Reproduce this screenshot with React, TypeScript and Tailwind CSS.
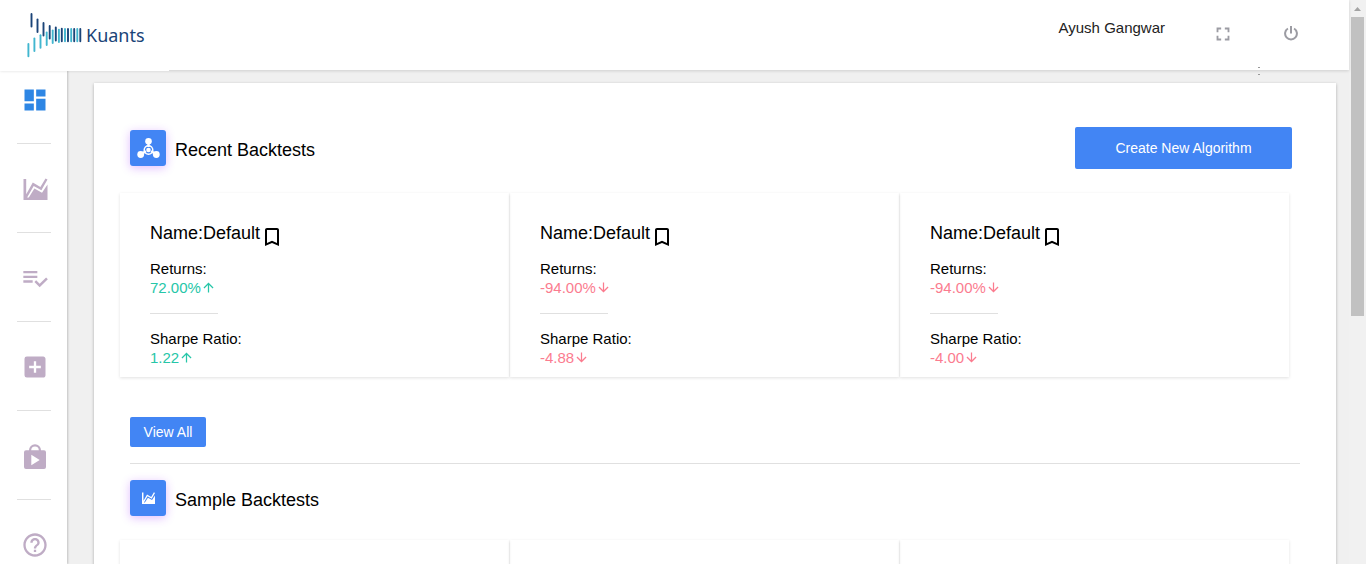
import type { ReactNode } from 'react';
import {
  MdAddBox,
  MdArrowDownward,
  MdArrowUpward,
  MdBookmarkBorder,
  MdDashboard,
  MdFullscreen,
  MdHelpOutline,
} from 'react-icons/md';

type Metric = { label: string; value: string; up: boolean };
type Backtest = { id: number; name: string; metrics: Metric[] };

const recent: Backtest[] = [
  {
    id: 1,
    name: 'Default',
    metrics: [
      { label: 'Returns:', value: '72.00%', up: true },
      { label: 'Sharpe Ratio:', value: '1.22', up: true },
    ],
  },
  {
    id: 2,
    name: 'Default',
    metrics: [
      { label: 'Returns:', value: '-94.00%', up: false },
      { label: 'Sharpe Ratio:', value: '-4.88', up: false },
    ],
  },
  {
    id: 3,
    name: 'Default',
    metrics: [
      { label: 'Returns:', value: '-94.00%', up: false },
      { label: 'Sharpe Ratio:', value: '-4.00', up: false },
    ],
  },
];

const sampleIds = [1, 2, 3];

const darkBars = [
  [31.5, 14, 26.5],
  [37.5, 19.5, 32],
  [43.5, 23, 35.5],
  [49.7, 26, 38.5],
  [55.8, 27.5, 40.5],
  [61.8, 28.7, 41.3],
  [68, 29, 41.3],
  [74.2, 29, 41.3],
  [80.3, 29, 41.3],
];

const tealBars = [
  [28.4, 44, 56.3],
  [34.4, 38.5, 51],
  [40.5, 35.3, 47.8],
  [46.7, 32.5, 45],
  [52.7, 30.5, 43],
  [58.9, 29.7, 42],
  [65, 29, 41.3],
  [71.2, 29, 41.3],
  [77.3, 29, 41.3],
];

function LogoMark() {
  return (
    <svg viewBox="26 12 57 46" className="h-[46px] w-[57px]" aria-hidden="true" strokeLinecap="round" strokeWidth="1.9">
      {tealBars.map(([x, y1, y2]) => (
        <line key={x} x1={x} x2={x} y1={y1} y2={y2} stroke="#41b6cf" />
      ))}
      {darkBars.map(([x, y1, y2]) => (
        <line key={x} x1={x} x2={x} y1={y1} y2={y2} stroke="#1b4478" />
      ))}
    </svg>
  );
}

function ChartIcon({ className }: { className: string }) {
  return (
    <svg viewBox="0 0 24 22" className={className} fill="currentColor" aria-hidden="true">
      <path d="M0 1h2.700v15.300L9.300 4.600l7.600 4.500L22 .4l2 1.200-6.100 10.700-7.700-4.400L3.600 19.500h1.700l5.600-9.100 7.600 4.300L24 6.600V22H0z" />
    </svg>
  );
}

function PlaylistCheckIcon() {
  return (
    <svg viewBox="0 0 24 24" className="size-7" fill="currentColor" aria-hidden="true">
      <path d="M14 10H2v2h12v-2zm0-4H2v2h12V6zM2 16h8v-2H2v2zm19.500-4.500L23 13l-6.990 7-4.510-4.500L13 14l3.010 3 5.490-5.500z" />
    </svg>
  );
}

function BagIcon() {
  return (
    <svg viewBox="0 0 22 25" className="h-[25px] w-[22px]" fill="currentColor" aria-hidden="true">
      <path
        fillRule="evenodd"
        d="M5 6.200a6 6 0 0 1 12 0h3a2 2 0 0 1 2 2V23a2 2 0 0 1-2 2H2a2 2 0 0 1-2-2V8.200a2 2 0 0 1 2-2zM7.200 6.200h7.600a3.800 3.800 0 0 0-7.600 0zM7.300 10.800v10.400l8.400-5.200z"
      />
    </svg>
  );
}

function PowerIcon() {
  return (
    <svg viewBox="0 0 14 16" className="h-4 w-[14px]" fill="none" stroke="currentColor" strokeWidth="2" aria-hidden="true">
      <path d="M7 0v7.500M3.900 2.500a5.900 5.900 0 1 0 6.200 0" />
    </svg>
  );
}

function MoleculeIcon() {
  return (
    <svg viewBox="0 0 24 22" className="h-[22px] w-6" aria-hidden="true">
      <g stroke="#fff" fill="none">
        <path d="M12.500 4v6M4.500 17.300l5.500-3M20.500 17.300l-5.500-3" strokeWidth="2.400" />
        <circle cx="12.500" cy="13" r="4.300" strokeWidth="1.500" />
      </g>
      <g fill="#fff">
        <circle cx="12.500" cy="4.300" r="3.300" />
        <circle cx="4.700" cy="17.500" r="3.400" />
        <circle cx="20.300" cy="17.500" r="3.400" />
        <circle cx="12.500" cy="13" r="2.300" />
      </g>
    </svg>
  );
}

const navItems: { label: string; icon: ReactNode; active?: boolean }[] = [
  { label: 'Dashboard', icon: <MdDashboard className="size-7" />, active: true },
  { label: 'Backtests', icon: <ChartIcon className="h-[22px] w-[25px]" /> },
  { label: 'Orders', icon: <PlaylistCheckIcon /> },
  { label: 'Create', icon: <MdAddBox className="size-7" /> },
  { label: 'Marketplace', icon: <BagIcon /> },
  { label: 'Help', icon: <MdHelpOutline className="size-7" /> },
];

function Sidebar() {
  return (
    <nav className="w-[67px] shrink-0 bg-white pt-4 pr-4 pl-[17px] shadow-[1px_0_2px_rgba(0,0,0,0.2)]">
      {navItems.map((item, i) => (
        <div key={item.label}>
          {i > 0 && <hr className="mt-[29px] mb-[31px] border-[#e0e0e0]" />}
          <a
            href="#"
            aria-label={item.label}
            className={`flex h-7 items-center justify-center pl-[2px] ${item.active ? 'text-[#2e86e4]' : 'text-[#bfacc5]'}`}
          >
            {item.icon}
          </a>
        </div>
      ))}
    </nav>
  );
}

function Header() {
  return (
    <header className="relative z-10 flex h-[70px] shrink-0 items-start bg-white shadow-[0_1px_3px_rgba(0,0,0,0.14)]">
      <a href="#" className="flex h-[71px] w-[169px] items-center bg-white pb-px pl-[26px]">
        <LogoMark />
        <span className="ml-[3px] font-['Noto_Sans',sans-serif] text-lg text-[#1b4478]">Kuants</span>
      </a>
      <div className="ml-auto flex items-center pt-4 pr-[51px]">
        <span className="mb-3 text-[15px] leading-6 text-[#222]">Ayush Gangwar</span>
        <button type="button" aria-label="Full screen" className="ml-[47px] text-[#9c9ca3]">
          <MdFullscreen className="size-[22px]" />
        </button>
        <button type="button" aria-label="Log out" className="ml-[50px] text-[#9c9ca3]">
          <PowerIcon />
        </button>
      </div>
      <div className="absolute right-[89px] -bottom-[5px] flex flex-col gap-[6px]" aria-hidden="true">
        <i className="h-px w-[2px] bg-[#999]" />
        <i className="h-px w-[2px] bg-[#999]" />
      </div>
    </header>
  );
}

function SectionTitle({ icon, children }: { icon: ReactNode; children: ReactNode }) {
  return (
    <div className="flex items-center gap-[9px]">
      <span className="flex size-9 items-center justify-center rounded-[3px] bg-[#4285f4] text-white shadow-[0_2px_10px_rgba(156,39,255,0.3)]">
        {icon}
      </span>
      <h2 className="pt-[3px] text-lg leading-6">{children}</h2>
    </div>
  );
}

function Card({ children }: { children?: ReactNode }) {
  return (
    <article className="min-h-[184px] px-[30px] pt-7 pb-[10px] shadow-[0_1px_3px_rgba(0,0,0,0.12)]">{children}</article>
  );
}

function BacktestCard({ test }: { test: Backtest }) {
  return (
    <Card>
      <div className="flex items-start">
        <h3 className="text-lg leading-6">Name:{test.name}</h3>
        <button type="button" aria-label="Bookmark" className="mt-1">
          <MdBookmarkBorder className="size-6" />
        </button>
      </div>
      <dl className="mt-[10px] text-[15px] leading-[19px]">
        {test.metrics.map((m, i) => (
          <div
            key={m.label}
            className={
              i > 0
                ? "before:mt-4 before:mb-[15px] before:block before:h-px before:w-[68px] before:bg-[#e0e0e0] before:content-['']"
                : ''
            }
          >
            <dt>{m.label}</dt>
            <dd className={`flex items-center ${m.up ? 'text-[#26c6a8]' : 'text-[#fb7c8f]'}`}>
              {m.value}
              {m.up ? <MdArrowUpward className="size-[15px]" /> : <MdArrowDownward className="size-[15px]" />}
            </dd>
          </div>
        ))}
      </dl>
    </Card>
  );
}

function CardRow({ children }: { children: ReactNode }) {
  return <div className="mt-6 mr-[47px] ml-[26px] grid grid-cols-3 gap-px">{children}</div>;
}

function ScrollTrack() {
  return (
    <div className="flex w-[17px] shrink-0 flex-col items-center bg-[#f1f1f1]" aria-hidden="true">
      <svg viewBox="0 0 17 17" className="size-[17px] shrink-0">
        <path d="M5 11h7L8.500 7z" fill="#a3a3a3" />
      </svg>
      <div className="h-[53%] w-[13px] bg-[#c1c1c1]" />
    </div>
  );
}

export default function App() {
  return (
    <div className="flex h-screen overflow-hidden bg-[#f0f0f0] font-['Liberation_Sans',Arial,sans-serif] text-black">
      <div className="flex min-w-0 flex-1 flex-col">
        <Header />
        <div className="flex min-h-0 flex-1">
          <Sidebar />
          <main className="min-w-0 flex-1 overflow-hidden pt-[13px] pr-[13px] pl-[27px]">
            <div className="bg-white pt-11 pb-10 shadow-[0_1px_3px_rgba(0,0,0,0.28)]">
              <section>
                <div className="mr-11 ml-9 flex items-center justify-between">
                  <SectionTitle icon={<MoleculeIcon />}>Recent Backtests</SectionTitle>
                  <button type="button" className="h-[42px] w-[217px] rounded-[2px] bg-[#4285f4] text-sm text-white">
                    Create New Algorithm
                  </button>
                </div>
                <CardRow>
                  {recent.map((test) => (
                    <BacktestCard key={test.id} test={test} />
                  ))}
                </CardRow>
                <button
                  type="button"
                  className="mt-10 ml-9 block h-[30px] w-[76px] rounded-[2px] bg-[#4285f4] text-sm text-white"
                >
                  View All
                </button>
              </section>
              <hr className="mt-4 mr-9 mb-4 ml-9 border-[#e0e0e0]" />
              <section>
                <div className="ml-9">
                  <SectionTitle icon={<ChartIcon className="h-3 w-[13px]" />}>Sample Backtests</SectionTitle>
                </div>
                <CardRow>
                  {sampleIds.map((id) => (
                    <Card key={id} />
                  ))}
                </CardRow>
              </section>
            </div>
          </main>
        </div>
      </div>
      <ScrollTrack />
    </div>
  );
}
